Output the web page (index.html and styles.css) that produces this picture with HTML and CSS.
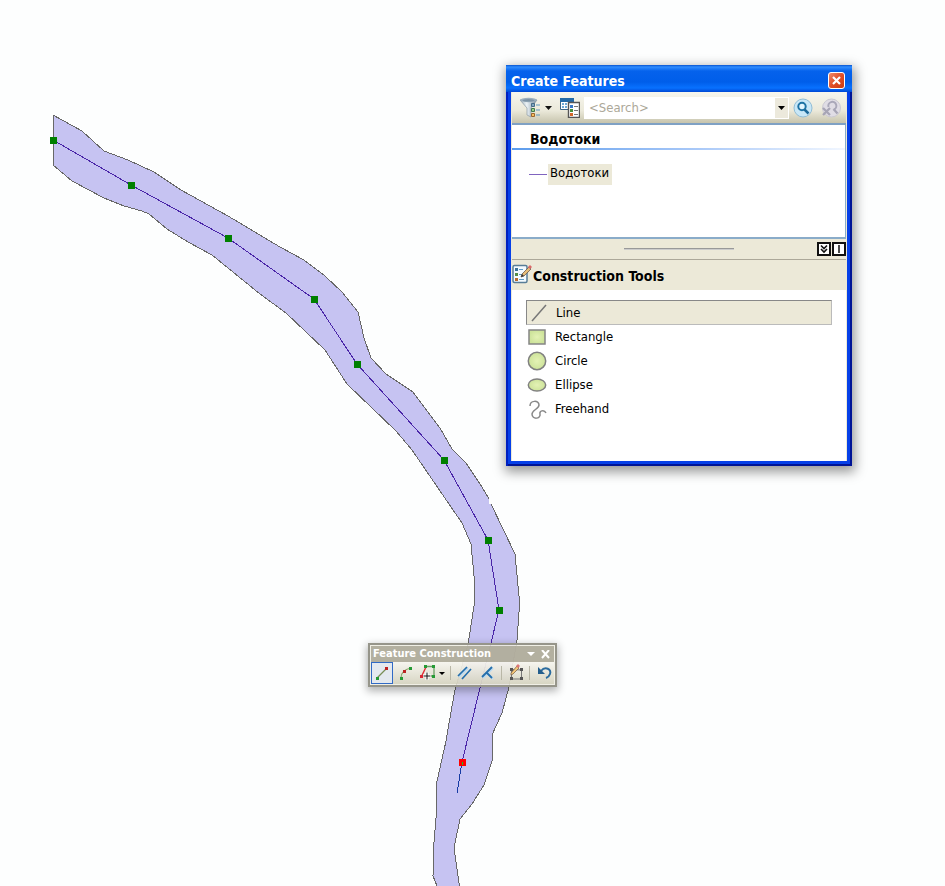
FILE: index.html
```html
<!DOCTYPE html>
<html lang="en">
<head>
<meta charset="utf-8">
<title>Map editor</title>
<link rel="stylesheet" href="styles.css">
</head>
<body>
<main class="map">
  <svg class="map-layer" role="img" aria-label="River polygon with centre line">
    <path class="river" d="M53 115L82 131 104 151 128 160 154 172 181 190 228 216 280 247 304 260 325 276 342 292 358 312 364 338 371 358 386 374 413 392 440 428 452 449 466 463 482 487 489 499V504H491L515 554 519 596V612L517 640 509 687 502 713 492 735V761L484 785 472 804 460 819 454 848 460 890H438L437 886 433 876 434 842 437 806 436 786 446 741 452 706 455 690 468 645 474 606 475 586 471 544 462 523 412 450 396 431 372 408 347 384 325 350 286 313 260 294 212 255 188 242 167 229 149 214 142 211 124 206 104 198 72 181 53 165Z"/>
    <path class="river-edge" d="M489 499L482 487 466 463 452 449 440 428 413 392 386 374 371 358 364 338 358 312 342 292 325 276 304 260 280 247 228 216 181 190 154 172 128 160 104 151 82 131 53 115V165L72 181 104 198 124 206 142 211 149 214 167 229 188 242 212 255 260 294 286 313 325 350 347 384 372 408 396 431 412 450 462 523 471 544 475 586 474 606 468 645 455 690 452 706 446 741 436 786 437 806 434 842 433 876 437 886M491 504L515 554 519 596V612L517 640 509 687 502 713 492 735V761L484 785 472 804 460 819 454 848 460 890"/>
    <path class="stream" d="M53 140L131 185 228 238 314 299 357 364 444 460 488 540 499 610 462 762"/>
    <path class="stream-next" d="M462 762L457 793"/>
    <path class="vertices" d="M50 137h7v7h-7zM128 182h7v7h-7zM225 235h7v7h-7zM311 296h7v7h-7zM354 361h7v7h-7zM441 457h7v7h-7zM485 537h7v7h-7zM496 607h7v7h-7z"/>
    <path fill="#f00" d="M459 759h7v7h-7z"/>
    <path fill="#1fc41f" d="M462 762h1v3h-1z"/>
  </svg>

  <section class="window" aria-label="Create Features">
    <header class="window-title">
      <h1>Create Features</h1>
      <button class="close" aria-label="Close">
        <svg width="17" height="17" viewBox="0 0 17 17"><defs><linearGradient id="red" x2="1" y2="1"><stop stop-color="#f09070"/><stop offset=".5" stop-color="#e04f28"/><stop offset="1" stop-color="#c83a10"/></linearGradient></defs><rect x=".5" y=".5" width="16" height="16" rx="2.5" fill="url(#red)" stroke="#fff"/><path d="M5 5l7 7M12 5l-7 7" stroke="#fff" stroke-width="2.2"/></svg>
      </button>
    </header>
    <div class="window-body">
      <div class="toolbar">
        <button class="filter" aria-label="Organize templates">
          <svg width="32" height="22" viewBox="0 0 32 22"><defs><linearGradient id="steel"><stop stop-color="#9fb0bb"/><stop offset=".4" stop-color="#edf3f6"/><stop offset="1" stop-color="#71889a"/></linearGradient></defs><path d="M0 3L7 11V18L11 20V11L17 3Z" fill="url(#steel)" stroke="#8b9aa5" stroke-width=".7"/><ellipse cx="8.500" cy="3" rx="8.500" ry="2.200" fill="#9db0bf"/><ellipse cx="8.500" cy="3.300" rx="6" ry="1.200" fill="#7d93a5"/><path fill="#7fa6c1" stroke="#456b86" d="M11.500 6.500h3v3h-3z"/><path fill="#9ed085" stroke="#3f7952" d="M11.500 11.500h3v3h-3z"/><path fill="#f5c060" stroke="#9b652f" d="M11.500 16.500h3v3h-3z"/><path d="M16 8h4M16 13h4M16 18h4" stroke="#6099c0"/><path d="M25 9h7l-3.500 4z" fill="#111"/></svg>
        </button>
        <button class="templates" aria-label="Organize feature templates">
          <svg width="20" height="20" viewBox="0 0 20 20"><path d="M.5 1.500h13v10H.500z" fill="#fff" stroke="#3c6688"/><path d="M0 0h14v4H0z" fill="#236aa8"/><path d="M2 5h2v2H2zm3 0h2v2H5zm3 0h2v2H8zM2 8h2v2H2zm3 0h2v2H5z" fill="#6fa9d6"/><path d="M8.500 4.500h11v15h-11z" fill="#fff" stroke="#555" stroke-width="1.400"/><path d="M10 7h3v3h-3z" fill="#3678c8"/><path d="M10 11h3v3h-3z" fill="#47913a"/><path d="M10 15h3v3h-3z" fill="#d4672a"/><path d="M14 8.500h4M14 12.500h4M14 16.500h4" stroke="#777"/></svg>
        </button>
        <div class="search">
          <input type="text" placeholder="&lt;Search&gt;" aria-label="Search templates">
          <button aria-label="Recent searches"><svg width="7" height="4" viewBox="0 0 7 4"><path d="M0 0h7L3.500 4z"/></svg></button>
        </div>
        <button aria-label="Search">
          <svg width="20" height="20" viewBox="0 0 20 20"><circle cx="10" cy="10" r="9" fill="#c8e7f7" stroke="#91bdd6"/><circle cx="9" cy="8.500" r="3.700" fill="#e2f6ff" stroke="#1d73a5" stroke-width="2"/><path d="M11.500 11.500l4 4" stroke="#1d6999" stroke-width="2.500"/></svg>
        </button>
        <button class="clear" aria-label="Clear search" disabled>
          <svg width="20" height="20" viewBox="0 0 20 20"><circle cx="10.500" cy="10" r="9" fill="#e0dde5" stroke="#cbc9d2"/><path d="M7.500 9a4 4 0 1 1 5.500 2.500" fill="none" stroke="#aaa8b9" stroke-width="2"/><path d="M12.500 11l4 4.500M2 10l7 7M9 10l-7 7" stroke="#a7a5b5" stroke-width="2.300"/></svg>
        </button>
      </div>
      <div class="templates-list">
        <h2>Водотоки</h2>
        <button class="template"><span class="swatch"></span><span class="template-name">Водотоки</span></button>
      </div>
      <div class="splitter">
        <span class="grip"></span>
        <button aria-label="Collapse"><svg width="14" height="14" viewBox="0 0 14 14"><path d="M1 1h12v12H1z" fill="#fff" stroke="#111" stroke-width="2"/><path d="M4 3.500l3 3 3-3M4 7l3 3 3-3" fill="none" stroke="#111" stroke-width="1.600"/></svg></button>
        <button aria-label="Restore"><svg width="14" height="14" viewBox="0 0 14 14"><path d="M1 1h12v12H1z" fill="#fff" stroke="#111" stroke-width="2"/><path d="M7 3v8" stroke="#111" stroke-width="1.500"/></svg></button>
      </div>
      <div class="tools-title">
        <svg width="20" height="20" viewBox="0 0 20 20"><rect x="1" y="1.500" width="14" height="17" rx="1.500" fill="#f4fbff" stroke="#587e98" stroke-width="1.500"/><path d="M3 4h3v3H3z" fill="#3c7298"/><path d="M3 9h3v3H3z" fill="#548c45"/><path d="M3 14h3v3H3z" fill="#b96c2b"/><path d="M7 5.500h4M7 10.500h3M7 15.500h5" stroke="#5e9cc8"/><path d="M10 10L17 3l2 2-7 7-3 1z" fill="#e6bd78" stroke="#6d594b" stroke-width=".8"/><path d="M16 3l2-2 2 2-2 2z" fill="#db6868"/><path d="M9 13l1-3 2 2z" fill="#333"/></svg>
        <h2>Construction Tools</h2>
      </div>
      <div class="tools">
        <svg width="0" height="0" class="defs"><defs><radialGradient id="green"><stop stop-color="#e4f2b5"/><stop offset="1" stop-color="#cde39a"/></radialGradient></defs></svg>
        <button class="tool selected"><svg viewBox="0 0 20 20"><path d="M4 18L18 2" stroke="#777" stroke-width="1.500"/></svg>Line</button>
        <button class="tool"><svg viewBox="0 0 20 20"><path d="M2 3h16v14H2z" fill="url(#green)" stroke="#858585" stroke-width="1.500"/></svg>Rectangle</button>
        <button class="tool"><svg viewBox="0 0 20 20"><circle cx="10" cy="10" r="8.700" fill="url(#green)" stroke="#808080" stroke-width="1.500"/></svg>Circle</button>
        <button class="tool"><svg viewBox="0 0 20 20"><ellipse cx="10" cy="10" rx="8.700" ry="6" fill="url(#green)" stroke="#808080" stroke-width="1.500"/></svg>Ellipse</button>
        <button class="tool"><svg viewBox="0 0 20 20"><path d="M3 7C3 1 12 1 12 6C12 10 5 11 5 15C5 21 14 20 13 15C12 12 17 10 19 14" fill="none" stroke="#888" stroke-width="1.500"/></svg>Freehand</button>
      </div>
    </div>
  </section>

  <section class="palette" aria-label="Feature Construction">
    <header class="palette-title">
      <h2>Feature Construction</h2>
      <button aria-label="Options"><svg width="9" height="9" viewBox="0 0 9 9"><path d="M1 2h8L5 6z" fill="#fff"/></svg></button>
      <button aria-label="Close"><svg width="9" height="9" viewBox="0 0 9 9"><path d="M1 0l7 8M8 0l-7 8" stroke="#fff" stroke-width="2"/></svg></button>
    </header>
    <div class="palette-tools">
      <button class="active" aria-label="Straight segment"><svg width="20" height="20" viewBox="0 0 20 20"><path d="M5 15L15 5" stroke="#7a8f55" stroke-width="1.200"/><path d="M4 14h3v3H4z" fill="#259a35"/><path d="M13 4h3v3h-3z" fill="#bd2020"/></svg></button>
      <button aria-label="End point arc"><svg width="20" height="20" viewBox="0 0 20 20"><path d="M4 15Q4 7 14 5" fill="none" stroke="#8a9f65" stroke-width="1.200"/><path d="M3 14h3v3H3zM12 4h3v3h-3z" fill="#259a35"/><path d="M6 7h3v3H6z" fill="#bd2020"/></svg></button>
      <button class="trace" aria-label="Trace"><svg width="26" height="20" viewBox="0 0 26 20"><path d="M6 3.500h8V13H8" fill="none" stroke="#6c9e66" stroke-width="1.300"/><path d="M6 4L1.500 13.500h5" fill="none" stroke="#e32a35" stroke-width="1.400"/><path d="M4 2h3v3H4zM12 2h3v3h-3zM12 12h3v3h-3z" fill="#259a35"/><path d="M0 12h3v3H0z" fill="#d92735"/><path d="M7 9v8M3 13h8" stroke="#fff" stroke-width="3"/><path d="M7 9.500v7M3.500 13h7" stroke="#111"/><path d="M19 9h6l-3 3z"/></svg></button>
      <span class="divider"></span>
      <button aria-label="Parallel"><svg width="20" height="20" viewBox="0 0 20 20"><path d="M5 14L14 5" stroke="#bbdaf0" stroke-width="2"/><path d="M4 13L13 4M8 16l9-10" stroke="#246fad" stroke-width="1.700"/></svg></button>
      <button aria-label="Perpendicular"><svg width="20" height="20" viewBox="0 0 20 20"><path d="M5 15L15 5M9 10l6 6" stroke="#bbdaf0" stroke-width="2"/><path d="M4 14L14 4M8 9l6 6" fill="none" stroke="#246fad" stroke-width="1.800"/></svg></button>
      <span class="divider"></span>
      <button aria-label="Finish sketch"><svg width="20" height="20" viewBox="0 0 20 20"><path d="M5.500 6.500L15.500 7V16H5.500z" fill="none" stroke="#777"/><path d="M4 5h3v3H4zM14 5h3v3h-3zM4 14h3v3H4zM14 14h3v3h-3z" fill="#555"/><path d="M5 10L11 3l2 2-6 6-2 1z" fill="#f3c778" stroke="#765944" stroke-width=".7"/><path d="M10 3l2-2 2 2-2 2z" fill="#dd7776"/></svg></button>
      <span class="divider"></span>
      <button aria-label="Undo"><svg width="20" height="20" viewBox="0 0 20 20"><path d="M7 8C11 3 18 6 16 11Q15 14 12 15" fill="none" stroke="#2b6c9f" stroke-width="2"/><path d="M4 4v7h7z" fill="#245f8d"/></svg></button>
    </div>
  </section>
</main>
</body>
</html>
```

FILE: styles.css
```css
* { box-sizing: border-box; }

body {
  margin: 0;
  background: #fdfefe;
  color: #000;
  font: 13px/16px "DejaVu Sans Condensed", "DejaVu Sans", sans-serif;
}

h1, h2 { margin: 0; font-size: 14px; font-weight: bold; }

button {
  display: flex;
  align-items: center;
  flex: none;
  padding: 0;
  border: 0;
  background: none;
  color: inherit;
  font: inherit;
}

svg { display: block; flex: none; }

.map { position: relative; min-height: 100vh; overflow: hidden; }
.map-layer { position: absolute; inset: 0; width: 100%; height: 100%; shape-rendering: crispEdges; }
.river { fill: #c6c3f2; }
.river-edge { fill: none; stroke: #686868; }
.stream { fill: none; stroke: #4a26a8; }
.stream-next { fill: none; stroke: #173ba5; }
.vertices { fill: #008000; }

.window {
  position: absolute;
  left: 506px;
  top: 65px;
  width: 346px;
  padding: 0 5px 5px;
  background: #0640e8;
  box-shadow: inset 2px 0 #0020c0, inset -2px -2px #001496, inset 0 1px #0752ca, 1px 4px 11px 2px rgba(0, 0, 0, .4);
}

.window-title {
  display: flex;
  align-items: center;
  justify-content: space-between;
  height: 27px;
  margin: 0 -5px;
  padding: 4px 7px 0 5px;
  background: linear-gradient(#0753cf 0, #2f8dff 2px, #0562ec 6px, #005eea 17px, #0871ff 23px, #0048d4 27px);
  color: #fff;
}

.window-body { background: #fff; border: solid #ece9d8; border-width: 0 1px; }

.toolbar {
  display: flex;
  align-items: center;
  gap: 8px;
  height: 33px;
  padding: 1px 5px 0 8px;
  border-bottom: 2px solid #7fa1c4;
  background: linear-gradient(#f7f6ee, #ebe9da 60%, #c7c4ad);
}

.search { display: flex; flex: 1; min-width: 0; height: 22px; margin: 0 -4px; background: #fff; }
.search input { flex: 1; min-width: 0; padding: 0 5px; border: 0; background: none; font: inherit; outline: 0; }
.search input::placeholder { color: #aca899; opacity: 1; }
.search button { justify-content: center; width: 15px; border: 1px solid #fff; background: #ece9dc; }

.templates-list { height: 114px; border: solid #8aacc9; border-width: 0 1px 2px 0; }
.templates-list h2 {
  padding: 6px 18px 1px;
  line-height: 16px;
  border-bottom: 2px solid;
  border-image: linear-gradient(90deg, #5c9cec, #a8c8f8 55%, #f2f7ff) 1;
}
.template { margin: 14px 0 0 17px; }
.swatch { width: 18px; height: 1px; margin-right: 1px; background: #8064bf; }
.template-name { height: 21px; padding: 1px 3px 4px 2px; background: #ece9d8; }

.splitter {
  display: flex;
  align-items: center;
  justify-content: flex-end;
  gap: 1px;
  height: 21px;
  background: #ece9d8;
  border-bottom: 1px solid #aca899;
}
.grip { width: 33%; height: 2px; margin-right: 82px; border-top: 1px solid #999; background: #ccc; }

.tools-title { display: flex; gap: 1px; height: 30px; padding-top: 4px; background: #ece9d8; }
.tools-title h2 { padding-top: 4px; }

.tools { min-height: 171px; padding: 10px 14px; }
.defs { position: absolute; }
.tool { width: 100%; height: 24px; gap: 8px; border: 1px solid transparent; text-align: left; }
.tool svg { width: 20px; height: 20px; }
.tool.selected { height: 25px; padding-left: 1px; border-color: #888 #bbb #bbb #888; background: #ece9d8; }

.palette {
  position: absolute;
  left: 368px;
  top: 643px;
  width: 189px;
  padding: 1px;
  border: 2px solid #96958a;
  background: rgba(237, 236, 224, .85);
  box-shadow: 0 3px 8px 1px rgba(0, 0, 0, .3);
}
.palette-title {
  display: flex;
  align-items: center;
  gap: 6px;
  height: 16px;
  padding: 0 4px 0 2px;
  background: rgba(168, 164, 148, .85);
  color: #fff;
}
.palette-title h2 { flex: 1; font-size: 11px; white-space: nowrap; }
.palette-tools {
  display: flex;
  align-items: center;
  justify-content: space-between;
  height: 22px;
  background: linear-gradient(rgba(250, 249, 245, .6), rgba(199, 197, 173, .6));
}
.palette-tools .active { border: 1px solid #316ac5; background: #e4e9ef; }
.divider { width: 1px; height: 14px; background: #b9b7a7; }
```
